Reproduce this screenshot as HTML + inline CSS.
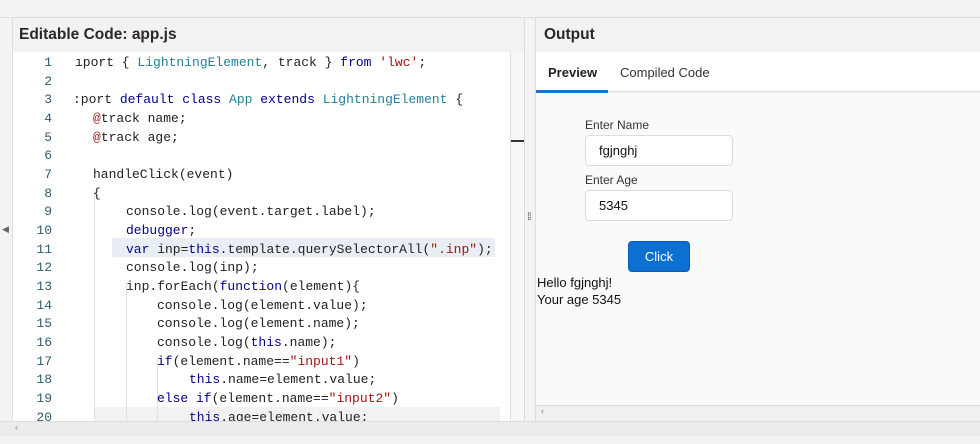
<!DOCTYPE html>
<html><head><meta charset="utf-8"><style>
*{margin:0;padding:0;box-sizing:border-box}
body{width:980px;height:444px;background:#f3f3f3;position:relative;overflow:hidden;font-family:"Liberation Sans",sans-serif}
.abs{position:absolute}
.hdr{background:#f3f2f2;font-weight:bold;font-size:15.5px;color:#2b2826}
.code{font-family:"Liberation Mono",monospace;font-size:13px;color:#222}
.ln{position:absolute;left:20px;width:32px;text-align:right;color:#2b5d70}
.cl{position:absolute;white-space:pre}
.k{color:#00008b}.t{color:#267f99}.s{color:#a31515}.d{color:#b02020}
</style></head><body>
<div class="abs" style="left:0;top:17px;width:980px;height:1px;background:#ddd"></div>
<div class="abs" style="left:12px;top:18px;width:513px;height:403px;background:#fff;border-left:1px solid #ddd"></div>
<div class="abs hdr" style="left:13px;top:18px;width:512px;height:34px;padding:8px 0 0 6px">Editable Code: app.js</div>
<div class="abs" style="left:112px;top:238px;width:383px;height:19px;background:#e9eef5"></div>
<div class="abs" style="left:95px;top:407px;width:405px;height:14px;background:#f2f2f2"></div>
<div class="abs" style="left:94px;top:190px;width:1px;height:231px;background:#e0e0e0"></div>
<div class="abs" style="left:126px;top:283px;width:1px;height:138px;background:#e0e0e0"></div>
<div class="abs" style="left:157px;top:358px;width:1px;height:63px;background:#e0e0e0"></div>
<div class="abs" style="left:510px;top:52px;width:1px;height:369px;background:#ddd"></div>
<div class="abs" style="left:511px;top:52px;width:13px;height:369px;background:#f7f7f7"></div>
<div class="abs" style="left:511px;top:140px;width:13px;height:2px;background:#333"></div>
<div class="abs" style="left:524px;top:18px;width:1px;height:403px;background:#ddd"></div>
<div class="code">
<div class="ln" style="top:55px">1</div><div class="cl" style="left:75px;top:55px">ıport { <span class="t">LightningElement</span>, track } <span class="k">from</span> <span class="s">'lwc'</span>;</div>
<div class="ln" style="top:74px">2</div>
<div class="ln" style="top:92px">3</div><div class="cl" style="left:73px;top:92px">:port <span class="k">default class</span> <span class="t">App</span> <span class="k">extends</span> <span class="t">LightningElement</span> {</div>
<div class="ln" style="top:111px">4</div><div class="cl" style="left:93px;top:111px"><span class="d">@</span>track name;</div>
<div class="ln" style="top:130px">5</div><div class="cl" style="left:93px;top:130px"><span class="d">@</span>track age;</div>
<div class="ln" style="top:148px">6</div>
<div class="ln" style="top:167px">7</div><div class="cl" style="left:93px;top:167px">handleClick(event)</div>
<div class="ln" style="top:186px">8</div><div class="cl" style="left:93px;top:186px">{</div>
<div class="ln" style="top:204px">9</div><div class="cl" style="left:126px;top:204px">console.log(event.target.label);</div>
<div class="ln" style="top:223px">10</div><div class="cl" style="left:126px;top:223px"><span class="k">debugger</span>;</div>
<div class="ln" style="top:242px">11</div><div class="cl" style="left:126px;top:242px"><span class="k">var</span> inp=<span class="k">this</span>.template.querySelectorAll(<span class="s">".inp"</span>);</div>
<div class="ln" style="top:260px">12</div><div class="cl" style="left:126px;top:260px">console.log(inp);</div>
<div class="ln" style="top:279px">13</div><div class="cl" style="left:126px;top:279px">inp.forEach(<span class="k">function</span>(element){</div>
<div class="ln" style="top:298px">14</div><div class="cl" style="left:157px;top:298px">console.log(element.value);</div>
<div class="ln" style="top:316px">15</div><div class="cl" style="left:157px;top:316px">console.log(element.name);</div>
<div class="ln" style="top:335px">16</div><div class="cl" style="left:157px;top:335px">console.log(<span class="k">this</span>.name);</div>
<div class="ln" style="top:354px">17</div><div class="cl" style="left:157px;top:354px"><span class="k">if</span>(element.name==<span class="s">"input1"</span>)</div>
<div class="ln" style="top:372px">18</div><div class="cl" style="left:189px;top:372px"><span class="k">this</span>.name=element.value;</div>
<div class="ln" style="top:391px">19</div><div class="cl" style="left:157px;top:391px"><span class="k">else if</span>(element.name==<span class="s">"input2"</span>)</div>
<div class="ln" style="top:410px;height:11px;overflow:hidden">20</div><div class="cl" style="left:189px;top:410px;height:11px;overflow:hidden"><span class="k">this</span>.age=element.value;</div>
</div>
<div class="abs" style="left:2px;top:224px;font-size:9px;color:#666">◀</div>
<div class="abs" style="left:527px;top:212px;font-size:10px;color:#333;letter-spacing:-1px">⁞⁞</div>
<div class="abs" style="left:535px;top:18px;width:1px;height:403px;background:#ddd"></div>
<div class="abs hdr" style="left:536px;top:18px;width:444px;height:34px;padding:8px 0 0 8px">Output</div>
<div class="abs" style="left:536px;top:52px;width:444px;height:40px;background:#fff;border-bottom:1px solid #ddd"></div>
<div class="abs" style="left:548px;top:65px;font-size:13px;font-weight:bold;color:#222">Preview</div>
<div class="abs" style="left:620px;top:65px;font-size:13px;color:#333">Compiled Code</div>
<div class="abs" style="left:536px;top:90px;width:72px;height:3px;background:#1b74c5"></div>
<div class="abs" style="left:536px;top:93px;width:444px;height:312px;background:#fafafa"></div>
<div class="abs" style="left:585px;top:118px;font-size:12px;color:#333">Enter Name</div>
<div class="abs" style="left:585px;top:135px;width:148px;height:31px;background:#fff;border:1px solid #ddd;border-radius:4px;padding:7px 0 0 13px;font-size:13px;color:#111">fgjnghj</div>
<div class="abs" style="left:585px;top:173px;font-size:12px;color:#333">Enter Age</div>
<div class="abs" style="left:585px;top:190px;width:148px;height:31px;background:#fff;border:1px solid #ddd;border-radius:4px;padding:7px 0 0 13px;font-size:13px;color:#111">5345</div>
<div class="abs" style="left:628px;top:241px;width:62px;height:31px;background:#0b70d2;border:1px solid #0a5fb4;border-radius:4px;color:#fff;font-size:13px;text-align:center;padding-top:7px">Click</div>
<div class="abs" style="left:537px;top:275px;font-size:13px;color:#111">Hello fgjnghj!</div>
<div class="abs" style="left:537px;top:292px;font-size:13px;color:#111">Your age 5345</div>
<div class="abs" style="left:536px;top:405px;width:444px;height:16px;background:#f0f0f0;border-top:1px solid #ddd"></div>
<div class="abs" style="left:541px;top:406px;font-size:9px;color:#888">‹</div>
<div class="abs" style="left:0;top:421px;width:980px;height:15px;background:#ececec;border-top:1px solid #ddd"></div>
<div class="abs" style="left:15px;top:422px;font-size:9px;color:#888">‹</div>
<div class="abs" style="left:0;top:436px;width:980px;height:8px;background:#f3f3f3"></div>
</body></html>
